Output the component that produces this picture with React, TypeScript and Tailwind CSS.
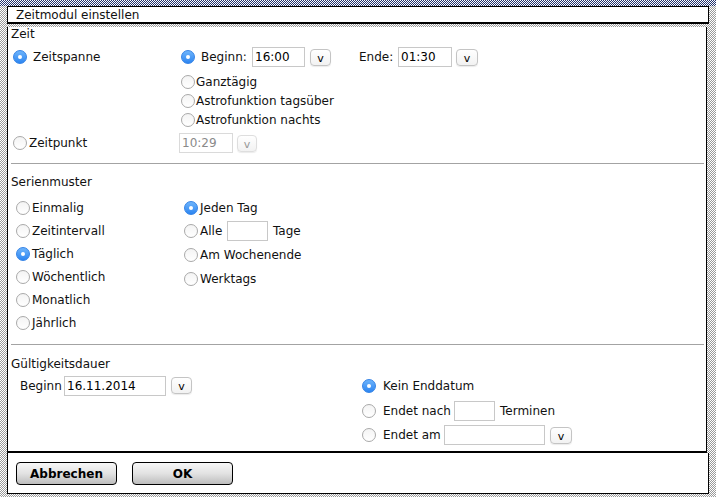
import React from "react"

function Radio({ checked = false }: { checked?: boolean }) {
  if (checked) {
    return (
      <span className="flex h-[14px] w-[14px] shrink-0 items-center justify-center rounded-full border border-[#3483e6] bg-linear-to-b from-[#6db4fb] to-[#2b85f1]">
        <span className="h-[4px] w-[4px] rounded-full bg-white" />
      </span>
    )
  }
  return (
    <span className="h-[14px] w-[14px] shrink-0 rounded-full border border-[#a9a9a9] bg-linear-to-b from-[#f4f4f4] to-white" />
  )
}

function Field({ value = "", w, disabled = false }: { value?: string; w: string; disabled?: boolean }) {
  return (
    <input
      readOnly
      value={value}
      className={`h-[20px] ${w} border border-[#c8c8c8] bg-white px-[2px] text-[12px] outline-none ${
        disabled ? "text-[#8a8a8a] border-[#dadada]" : "text-black"
      }`}
    />
  )
}

function VBtn({ w = "w-[21px]", disabled = false }: { w?: string; disabled?: boolean }) {
  return (
    <span
      className={`flex h-[17px] ${w} items-center justify-center rounded-[4px] border bg-linear-to-b from-white to-[#f2f2f2] pt-[2px] text-[11px] leading-none shadow-[0_1px_1px_rgba(0,0,0,0.08)] ${
        disabled ? "border-[#dedede] text-[#999]" : "border-[#c4c4c4] text-black"
      }`}
    >
      v
    </span>
  )
}

function Separator() {
  return <div className="ml-[3px] mr-[2px] h-px bg-[#a3a3a3]" />
}

export default function App() {
  return (
    <div className="h-[497px] w-[716px] overflow-hidden bg-[image:repeating-conic-gradient(#9a9a9a_0_25%,#ffffff_0_50%)] bg-[length:2px_2px] font-['DejaVu_Sans',Verdana,sans-serif] text-[12px] text-[#111]">
      {/* page behind the dialog */}
      <div className="h-[6px] w-full bg-[image:repeating-conic-gradient(#23336f_0_25%,#ffffff_0_50%)] bg-[length:2px_2px]" />

      <div className="pl-[7px]">
        {/* Title */}
        <div className="flex h-[18px] w-[702px] items-center border-x border-t border-b-2 border-black bg-white pl-[8px] leading-none">
          Zeitmodul einstellen
        </div>

        {/* Body */}
        <div className="h-[426px] w-[700px] border-x border-b-2 border-black bg-white">
          {/* Zeit */}
          <div className="mt-[3px] h-[15px] pl-[3px] leading-[15px]">Zeit</div>

          <div className="mt-[4px] flex h-[22px] items-center">
            <div className="flex w-[173px] items-center gap-[6px] pl-[5px]">
              <Radio checked />
              <span>Zeitspanne</span>
            </div>
            <Radio checked />
            <span className="ml-[6px] w-[51px]">Beginn:</span>
            <Field value="16:00" w="w-[53px]" />
            <span className="ml-[5px]">
              <VBtn />
            </span>
            <span className="ml-[28px] w-[39px]">Ende:</span>
            <Field value="01:30" w="w-[54px]" />
            <span className="ml-[4px]">
              <VBtn w="w-[22px]" />
            </span>
          </div>

          {["Ganztägig", "Astrofunktion tagsüber", "Astrofunktion nachts"].map((t, i) => (
            <div key={t} className={`flex h-[19px] items-center ${i === 0 ? "mt-[4px]" : ""}`}>
              <div className="w-[173px]" />
              <Radio />
              <span className="ml-[1px]">{t}</span>
            </div>
          ))}

          <div className="mt-[3px] flex h-[22px] items-center">
            <div className="flex w-[171px] items-center gap-[2px] pl-[5px]">
              <Radio />
              <span>Zeitpunkt</span>
            </div>
            <Field value="10:29" w="w-[54px]" disabled />
            <span className="ml-[4px]">
              <VBtn w="w-[20px]" disabled />
            </span>
          </div>

          <div className="mt-[9px]">
            <Separator />
          </div>

          {/* Serienmuster */}
          <div className="mt-[11px] h-[15px] pl-[3px] leading-[15px]">Serienmuster</div>

          <div className="mt-[6px] flex">
            <div className="flex w-[176px] flex-col pl-[8px]">
              {[
                ["Einmalig", false],
                ["Zeitintervall", false],
                ["Täglich", true],
                ["Wöchentlich", false],
                ["Monatlich", false],
                ["Jährlich", false],
              ].map(([t, c]) => (
                <div key={t as string} className="flex h-[23px] items-center gap-[2px]">
                  <Radio checked={c as boolean} />
                  <span>{t as string}</span>
                </div>
              ))}
            </div>
            <div className="flex flex-col">
              <div className="flex h-[23px] items-center gap-[2px]">
                <Radio checked />
                <span>Jeden Tag</span>
              </div>
              <div className="flex h-[24px] items-center">
                <Radio />
                <span className="ml-[2px] w-[27px]">Alle</span>
                <Field w="w-[41px]" />
                <span className="ml-[5px]">Tage</span>
              </div>
              <div className="flex h-[24px] items-center gap-[2px]">
                <Radio />
                <span>Am Wochenende</span>
              </div>
              <div className="flex h-[23px] items-center gap-[2px]">
                <Radio />
                <span>Werktags</span>
              </div>
            </div>
          </div>

          <div className="mt-[10px]">
            <Separator />
          </div>

          {/* Gültigkeitsdauer */}
          <div className="mt-[12px] h-[15px] pl-[3px] leading-[15px]">Gültigkeitsdauer</div>

          <div className="mt-[1px] flex">
            <div className="flex h-[25px] w-[354px] items-center pl-[12px]">
              <span className="w-[44px]">Beginn</span>
              <Field value="16.11.2014" w="w-[102px]" />
              <span className="ml-[5px]">
                <VBtn />
              </span>
            </div>
            <div className="flex flex-col">
              <div className="flex h-[25px] items-center gap-[7px]">
                <Radio checked />
                <span>Kein Enddatum</span>
              </div>
              <div className="flex h-[25px] items-center">
                <Radio />
                <span className="ml-[7px] w-[71px]">Endet nach</span>
                <Field w="w-[41px]" />
                <span className="ml-[5px]">Terminen</span>
              </div>
              <div className="flex h-[24px] items-center">
                <Radio />
                <span className="ml-[7px] w-[61px]">Endet am</span>
                <Field w="w-[101px]" />
                <span className="ml-[5px]">
                  <VBtn w="w-[22px]" />
                </span>
              </div>
            </div>
          </div>
        </div>

        {/* Footer */}
        <div className="flex h-[41px] w-[702px] gap-[15px] border-x border-b border-black bg-white pl-[8px] pt-[9px]">
          {["Abbrechen", "OK"].map((t) => (
            <button
              key={t}
              className="flex h-[23px] w-[101px] items-center justify-center rounded-[4px] border border-black bg-linear-to-b from-[#f7f7f7] via-[#e2e2e2] to-[#bdbdbd] text-[12px] font-bold text-black"
            >
              {t}
            </button>
          ))}
        </div>
      </div>
    </div>
  )
}
